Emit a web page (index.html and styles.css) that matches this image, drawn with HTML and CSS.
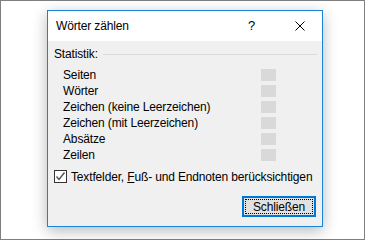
FILE: index.html
```html
<!DOCTYPE html>
<html lang="de">
<head>
<meta charset="utf-8">
<link rel="stylesheet" href="styles.css">
</head>
<body>
<div class="frame">
  <div class="dialog">
    <div class="titlebar">
      <span class="title">Wörter zählen</span>
      <span class="help">?</span>
      <span class="close">
        <svg width="10" height="10" viewBox="0 0 10 10"><path d="M0.5 0.5 L9.5 9.5 M9.5 0.5 L0.5 9.5" stroke="#000" stroke-width="1" fill="none"/></svg>
      </span>
    </div>
    <div class="content">
      <div class="group-head">
        <span>Statistik:</span>
        <span class="rule"></span>
      </div>
      <div class="stats">
        <div class="row"><span>Seiten</span><span class="val"></span></div>
        <div class="row"><span>Wörter</span><span class="val"></span></div>
        <div class="row"><span>Zeichen (keine Leerzeichen)</span><span class="val"></span></div>
        <div class="row"><span>Zeichen (mit Leerzeichen)</span><span class="val"></span></div>
        <div class="row"><span>Absätze</span><span class="val"></span></div>
        <div class="row"><span>Zeilen</span><span class="val"></span></div>
      </div>
      <div class="check">
        <span class="box">
          <svg width="11" height="11" viewBox="0 0 11 11"><path d="M1.5 5.5 L4 8.5 L9.5 1.5" stroke="#4a4a4a" stroke-width="1.3" fill="none"/></svg>
        </span>
        <span>Textfelder, <u>F</u>uß- und Endnoten berücksichtigen</span>
      </div>
      <div class="actions">
        <button class="btn"><span class="focus">Schließen</span></button>
      </div>
    </div>
  </div>
</div>
</body>
</html>
```

FILE: styles.css
```css
html, body {
  margin: 0;
  padding: 0;
  background: #ffffff;
}
body {
  font-family: "Liberation Sans", Arial, sans-serif;
  font-size: 12px;
  letter-spacing: -0.15px;
  color: #000;
  white-space: nowrap;
}
.frame {
  box-sizing: border-box;
  width: 365px;
  height: 240px;
  border: 1px solid #7f7f7f;
  background: #fff;
  padding: 9px 0 0 46px;
}
.dialog {
  box-sizing: border-box;
  width: 276px;
  height: 217px;
  border: 1px solid #1883d7;
  background: #f0f0f0;
  box-shadow: 0 4px 14px rgba(0,0,0,0.28);
  display: flex;
  flex-direction: column;
}
.titlebar {
  height: 30px;
  background: #fff;
  display: flex;
  align-items: center;
  padding-left: 8px;
  padding-bottom: 1px;
  box-sizing: border-box;
}
.title {
  flex: 1;
  font-size: 12px;
}
.help {
  width: 8px;
  font-size: 13px;
  margin-right: 39px;
}
.close {
  display: flex;
  margin-right: 17px;
}
.content {
  padding: 5px 5px 0 6px;
  display: flex;
  flex-direction: column;
}
.group-head {
  display: flex;
  align-items: center;
  height: 16px;
}
.rule {
  flex: 1;
  height: 0;
  border-top: 1px solid #dcdcdc;
  margin-left: 5px;
  margin-top: 1px;
}
.stats {
  margin-top: 5px;
  padding-left: 9px;
  padding-right: 41px;
}
.row {
  display: flex;
  align-items: center;
  justify-content: space-between;
  height: 16px;
}
.val {
  width: 15px;
  height: 12px;
  background: #d9d9d9;
}
.check {
  margin-top: 6px;
  display: flex;
  align-items: center;
  height: 15px;
  gap: 4px;
}
.box {
  box-sizing: border-box;
  width: 13px;
  height: 13px;
  border: 1px solid #333;
  background: #fff;
  display: flex;
}
.actions {
  margin-top: 12px;
  display: flex;
  justify-content: flex-end;
  padding-right: 1px;
}
.btn {
  box-sizing: border-box;
  width: 74px;
  height: 21px;
  border: 2px solid #0078d7;
  background: #e1e1e1;
  padding: 1px;
  margin: 0;
  font: inherit;
  letter-spacing: inherit;
  color: #000;
  display: flex;
}
.focus {
  flex: 1;
  border: 1px dotted #000;
  display: flex;
  align-items: center;
  justify-content: center;
}
```
